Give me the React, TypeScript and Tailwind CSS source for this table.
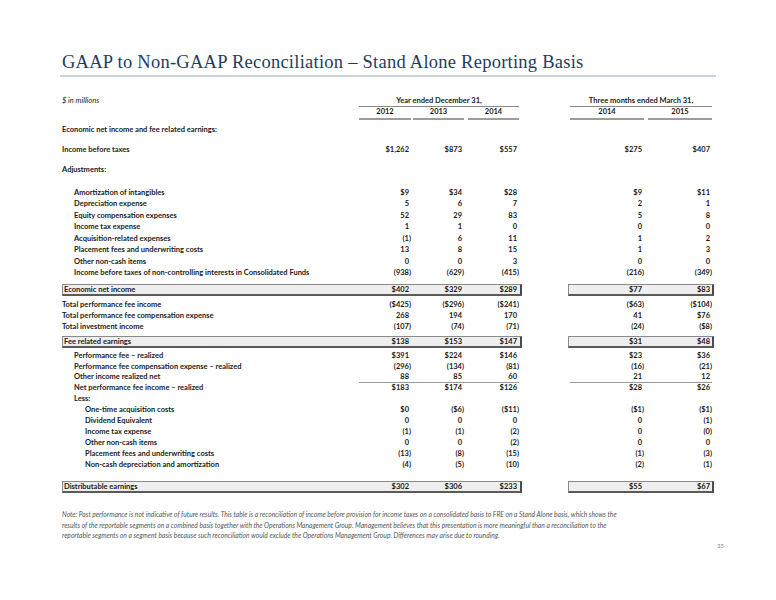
const GRID = "grid grid-cols-[297px_52px_53px_55px_51px_74px_68px]";

function Val({ v, line }: { v: string; line?: boolean }) {
  const paren = v.endsWith(")");
  return (
    <div
      className={`text-right ${paren ? "" : "pr-[2px]"} ${
        line ? "border-b border-[#9a9a9a]" : ""
      }`}
    >
      {v}
    </div>
  );
}

function Row({
  label,
  v = [],
  indent = 0,
  cls = "",
  line = false,
}: {
  label: string;
  v?: string[];
  indent?: number;
  cls?: string;
  line?: boolean;
}) {
  const pad = indent === 2 ? "pl-[23px]" : indent === 1 ? "pl-[12px]" : "";
  return (
    <div className={`${GRID} ${cls}`}>
      <div className={`${pad} whitespace-nowrap`}>{label}</div>
      {v.length > 0 ? (
        <>
          <Val v={v[0]} line={line} />
          <Val v={v[1]} line={line} />
          <Val v={v[2]} line={line} />
          <div />
          <Val v={v[3]} line={line} />
          <Val v={v[4]} line={line} />
        </>
      ) : null}
    </div>
  );
}

function BoxRow({ label, v, cls }: { label: string; v: string[]; cls: string }) {
  const box =
    "h-[12px] bg-[#eeeeee] border-l border-t border-[#8a8a8a] border-r-2 border-b-2 border-r-[#4a4a4a] border-b-[#5a5a5a] leading-[9px]";
  return (
    <div className={`flex ${cls}`}>
      <div className={`w-[460px] grid grid-cols-[296px_52px_53px_55px] ${box}`}>
        <div className="pl-[1px]">{label}</div>
        <Val v={v[0]} />
        <Val v={v[1]} />
        <Val v={v[2]} />
      </div>
      <div className="w-[46px]" />
      <div className={`w-[146px] grid grid-cols-[1px_74px_68px] ${box}`}>
        <div />
        <Val v={v[3]} />
        <Val v={v[4]} />
      </div>
    </div>
  );
}

const adjustments: [string, string[]][] = [
  ["Amortization of intangibles", ["$9", "$34", "$28", "$9", "$11"]],
  ["Depreciation expense", ["5", "6", "7", "2", "1"]],
  ["Equity compensation expenses", ["52", "29", "83", "5", "8"]],
  ["Income tax expense", ["1", "1", "0", "0", "0"]],
  ["Acquisition-related expenses", ["(1)", "6", "11", "1", "2"]],
  ["Placement fees and underwriting costs", ["13", "8", "15", "1", "3"]],
  ["Other non-cash items", ["0", "0", "3", "0", "0"]],
  [
    "Income before taxes of non-controlling interests in Consolidated Funds",
    ["(938)", "(629)", "(415)", "(216)", "(349)"],
  ],
];

const totals: [string, string[]][] = [
  ["Total performance fee income", ["($425)", "($296)", "($241)", "($63)", "($104)"]],
  ["Total performance fee compensation expense", ["268", "194", "170", "41", "$76"]],
  ["Total investment income", ["(107)", "(74)", "(71)", "(24)", "($8)"]],
];

const less: [string, string[]][] = [
  ["One-time acquisition costs", ["$0", "($6)", "($11)", "($1)", "($1)"]],
  ["Dividend Equivalent", ["0", "0", "0", "0", "(1)"]],
  ["Income tax expense", ["(1)", "(1)", "(2)", "0", "(0)"]],
  ["Other non-cash items", ["0", "0", "(2)", "0", "0"]],
  ["Placement fees and underwriting costs", ["(13)", "(8)", "(15)", "(1)", "(3)"]],
  ["Non-cash depreciation and amortization", ["(4)", "(5)", "(10)", "(2)", "(1)"]],
];

export default function App() {
  return (
    <div className="w-[776px] h-[600px] bg-white overflow-hidden flex flex-col pt-[50px]">
      <h1 className="pl-[62px] font-['Liberation_Serif',serif] text-[18.5px] leading-[24px] tracking-[0.25px] text-[#1f3c5e]">
        GAAP to Non-GAAP Reconciliation – Stand Alone Reporting Basis
      </h1>
      <div className="ml-[60px] w-[656px] h-[1.5px] bg-[#c8d3de] mt-[1px]" />

      <div className="pl-[62px] font-['Lato',sans-serif] font-bold text-[7.5px] text-[#1a1a1a]">
        {/* header */}
        <div className={`${GRID} mt-[18.5px] h-[11px] leading-[11px]`}>
          <div className="italic font-normal">$ in millions</div>
          <div className="col-span-3 text-center border-b border-[#888]">Year ended December 31,</div>
          <div />
          <div className="col-span-2 text-center border-b border-[#888]">Three months ended March 31,</div>
        </div>
        <div className={`${GRID} h-[14px] leading-[12px]`}>
          <div />
          <div className="text-center border-b-2 border-[#9c9c9c]">2012</div>
          <div className="ml-[2px] text-center border-b-2 border-[#9c9c9c]">2013</div>
          <div className="ml-[4px] text-center border-b-2 border-[#9c9c9c]">2014</div>
          <div />
          <div className="text-center border-b-2 border-[#9c9c9c]">2014</div>
          <div className="ml-[4px] text-center border-b-2 border-[#9c9c9c]">2015</div>
        </div>

        <Row label="Economic net income and fee related earnings:" cls="mt-[3.5px] h-[11px] leading-[11px]" />
        <Row
          label="Income before taxes"
          v={["$1,262", "$873", "$557", "$275", "$407"]}
          cls="mt-[9.5px] h-[11px] leading-[11px]"
        />
        <Row label="Adjustments:" cls="mt-[9px] h-[11px] leading-[11px]" />

        <div className="mt-[11.5px]">
          {adjustments.map(([l, v]) => (
            <Row key={l} label={l} v={v} indent={1} cls="h-[11.5px] leading-[11.5px]" />
          ))}
        </div>

        <BoxRow label="Economic net income" v={["$402", "$329", "$289", "$77", "$83"]} cls="mt-[5px]" />

        <div className="mt-[3.5px]">
          {totals.map(([l, v]) => (
            <Row key={l} label={l} v={v} cls="h-[11px] leading-[11px]" />
          ))}
        </div>

        <BoxRow label="Fee related earnings" v={["$138", "$153", "$147", "$31", "$48"]} cls="mt-[3.5px]" />

        <div className="mt-[3.5px]">
          <Row label="Performance fee – realized" v={["$391", "$224", "$146", "$23", "$36"]} indent={1} cls="h-[10.5px] leading-[10.5px]" />
          <Row
            label="Performance fee compensation expense – realized"
            v={["(296)", "(134)", "(81)", "(16)", "(21)"]}
            indent={1}
            cls="h-[10.5px] leading-[10.5px]"
          />
          <Row label="Other income realized net" v={["88", "85", "60", "21", "12"]} indent={1} line cls="h-[10px] leading-[10px]" />
          <Row label="Net performance fee income – realized" v={["$183", "$174", "$126", "$28", "$26"]} indent={1} cls="h-[11px] leading-[11px]" />
          <Row label="Less:" indent={1} cls="h-[11px] leading-[11px]" />
          {less.map(([l, v]) => (
            <Row key={l} label={l} v={v} indent={2} cls="h-[11px] leading-[11px]" />
          ))}
        </div>

        <BoxRow label="Distributable earnings" v={["$302", "$306", "$233", "$55", "$67"]} cls="mt-[11px]" />
      </div>

      <p className="pl-[62px] mt-[16px] font-['Lato',sans-serif] italic text-[6.7px] leading-[10.5px] text-[#555] whitespace-nowrap">
        Note: Past performance is not indicative of future results. This table is a reconciliation of income before provision for income taxes on a consolidated basis to FRE on a Stand Alone basis, which shows the
        <br />
        results of the reportable segments on a combined basis together with the Operations Management Group. Management believes that this presentation is more meaningful than a reconciliation to the
        <br />
        reportable segments on a segment basis because such reconciliation would exclude the Operations Management Group. Differences may arise due to rounding.
      </p>
      <div className="flex justify-end pr-[52px] mt-[0px] font-['Lato',sans-serif] text-[6px] text-[#8a8a8a]">35</div>
    </div>
  );
}
